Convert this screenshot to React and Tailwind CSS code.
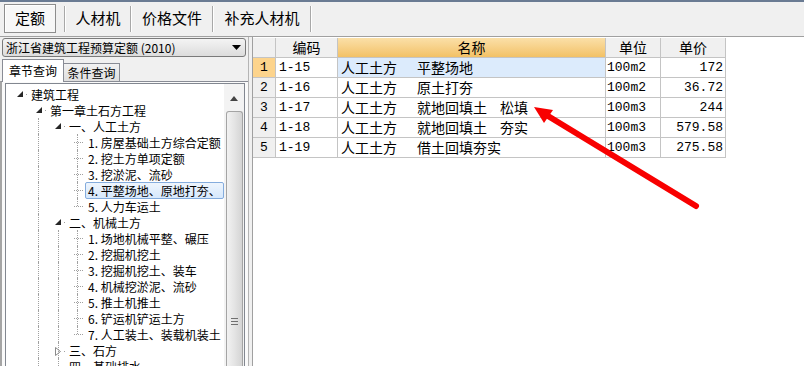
import React from "react";

const cjk = { fontFamily: '"Noto Sans CJK SC", "Liberation Sans", sans-serif' };
const mono = { fontFamily: '"Liberation Mono", "Noto Sans CJK SC", monospace' };

const topTabs = [
  { label: "定额", w: "w-[62px]", active: true },
  { label: "人材机", w: "w-[66px]" },
  { label: "价格文件", w: "w-[82px]" },
  { label: "补充人材机", w: "w-[98px]" },
];

// level: 0..3, kind: open | closed | leaf
const tree = [
  { level: 0, kind: "open", text: "建筑工程", guides: [] },
  { level: 1, kind: "open", text: "第一章土石方工程", guides: [] },
  { level: 2, kind: "open", text: "一、人工土方", guides: [38] },
  { level: 3, kind: "leaf", text: "1. 房屋基础土方综合定额", guides: [38, 77] },
  { level: 3, kind: "leaf", text: "2. 挖土方单项定额", guides: [38, 77] },
  { level: 3, kind: "leaf", text: "3. 挖淤泥、流砂", guides: [38, 77] },
  { level: 3, kind: "leaf", text: "4. 平整场地、原地打夯、", guides: [38, 77], selected: true },
  { level: 3, kind: "leaf", text: "5. 人力车运土", guides: [38], half: 77 },
  { level: 2, kind: "open", text: "二、机械土方", guides: [38] },
  { level: 3, kind: "leaf", text: "1. 场地机械平整、碾压", guides: [38, 58, 77] },
  { level: 3, kind: "leaf", text: "2. 挖掘机挖土", guides: [38, 58, 77] },
  { level: 3, kind: "leaf", text: "3. 挖掘机挖土、装车", guides: [38, 58, 77] },
  { level: 3, kind: "leaf", text: "4. 机械挖淤泥、流砂", guides: [38, 58, 77] },
  { level: 3, kind: "leaf", text: "5. 推土机推土", guides: [38, 58, 77] },
  { level: 3, kind: "leaf", text: "6. 铲运机铲运土方", guides: [38, 58, 77] },
  { level: 3, kind: "leaf", text: "7. 人工装土、装载机装土", guides: [38, 58], half: 77 },
  { level: 2, kind: "closed", text: "三、石方", guides: [38, 58] },
  { level: 2, kind: "leaf", text: "四、基础排水", guides: [38, 58] },
];

const textX = [24, 43, 62, 81];

const rows = [
  { no: "1", code: "1-15", name: ["人工土方", "平整场地"], unit: "100m2", price: "172" },
  { no: "2", code: "1-16", name: ["人工土方", "原土打夯"], unit: "100m2", price: "36.72" },
  { no: "3", code: "1-17", name: ["人工土方", "就地回填土", "松填"], unit: "100m3", price: "244" },
  { no: "4", code: "1-18", name: ["人工土方", "就地回填土", "夯实"], unit: "100m3", price: "579.58" },
  { no: "5", code: "1-19", name: ["人工土方", "借土回填夯实"], unit: "100m3", price: "275.58" },
];

function Expander({ kind }) {
  if (kind === "open") {
    return (
      <svg width="6" height="6" viewBox="0 0 6 6" className="shrink-0">
        <polygon points="6,0 6,6 0,6" fill="#262626" />
      </svg>
    );
  }
  return (
    <svg width="6" height="9" viewBox="0 0 6 9" className="shrink-0">
      <polygon points="0.5,0.5 5.5,4.5 0.5,8.5" fill="none" stroke="#8a8a8a" />
    </svg>
  );
}

function TreeRow({ item }) {
  const x = textX[item.level];
  return (
    <div className="relative h-[16px] flex items-center" style={{ paddingLeft: x }}>
      {item.guides.map((g) => (
        <span
          key={g}
          className="absolute top-0 bottom-0 border-l border-dotted border-[#a0a0a0]"
          style={{ left: g - 6 }}
        />
      ))}
      {item.half && (
        <span
          className="absolute top-0 h-[8px] border-l border-dotted border-[#a0a0a0]"
          style={{ left: item.half - 6 }}
        />
      )}
      {item.kind === "leaf" ? (
        <span
          className="absolute top-[8px] w-[9px] border-t border-dotted border-[#a0a0a0]"
          style={{ left: x - 13 }}
        />
      ) : (
        <span className="absolute top-[5px] flex items-center" style={{ left: x - 13 }}>
          <Expander kind={item.kind} />
          <span className="ml-[3px] w-[1px] h-[1px] bg-[#a0a0a0]" />
        </span>
      )}
      <span
        className={
          "whitespace-nowrap text-[12px] leading-[15px] text-black px-[2px] -ml-[2px] " +
          (item.selected
            ? "bg-gradient-to-b from-[#eef5fd] to-[#d6e8fc] border border-[#84acdd] rounded-[2px]"
            : "border border-transparent")
        }
        style={cjk}
      >
        {item.text}
      </span>
    </div>
  );
}

export default function App() {
  return (
    <div className="w-[804px] h-[366px] overflow-hidden bg-[#f0f0f0] flex flex-col relative" style={cjk}>
      {/* top tab strip */}
      <div className="h-[37px] shrink-0 border-t-2 border-[#6a7b93] border-b border-b-[#a0a0a0] flex pl-[4px] pt-[1px]">
        {topTabs.map((t) => (
          <div key={t.label} className={`${t.w} h-[31px] flex items-center`}>
            {t.active ? (
              <div className="w-[52px] h-[29px] flex items-center justify-center border border-[#8d8d8d] bg-[#f7f7f7] shadow-[inset_1px_1px_0_#ffffff]">
                <span className="text-[15px] text-black">{t.label}</span>
              </div>
            ) : (
              <div className="flex-1 h-[26px] flex items-center justify-center">
                <span className="text-[15px] text-black">{t.label}</span>
              </div>
            )}
            <div className="w-[2px] h-[26px] ml-auto border-l border-[#a8a8a8] border-r border-r-white" />
          </div>
        ))}
      </div>

      <div className="flex flex-1 min-h-0">
        {/* left pane */}
        <div className="w-[248px] shrink-0 flex flex-col pt-[1px]">
          <div className="mx-[2px] h-[19px] rounded-[3px] border border-[#7a7a7a] bg-gradient-to-b from-[#f4f4f4] to-[#dcdcdc] flex items-center pl-[3px] pr-[4px]">
            <span className="text-[12px] text-black flex-1 whitespace-nowrap">浙江省建筑工程预算定额 (2010)</span>
            <svg width="9" height="5" viewBox="0 0 9 5">
              <polygon points="0,0 9,0 4.5,5" fill="#000" />
            </svg>
          </div>
          <div className="flex items-end h-[23px] pl-[2px] mt-[1px]">
            <div className="w-[62px] h-[23px] bg-white border border-b-0 border-[#898c95] flex items-center justify-center -mb-[1px] relative z-10">
              <span className="text-[12px] text-black">章节查询</span>
            </div>
            <div className="w-[56px] h-[18px] bg-gradient-to-b from-[#f2f2f2] to-[#dedede] border border-b-0 border-l-0 border-[#898c95] flex items-center justify-center">
              <span className="text-[12px] text-black">条件查询</span>
            </div>
          </div>
          <div className="flex-1 min-h-0 border-l-2 border-[#a5a5a5] border-t border-t-[#898c95] bg-[#fafafa] pl-[3px] pr-[3px] pt-[1px] flex">
            <div className="flex-1 min-w-0 border border-b-0 border-[#828790] bg-white flex">
              <div className="flex-1 min-w-0 overflow-hidden pt-[2px]">
                {tree.map((item, i) => (
                  <TreeRow key={i} item={item} />
                ))}
              </div>
              {/* scrollbar */}
              <div className="w-[20px] shrink-0 bg-[#f3f3f3] flex flex-col items-center pt-[1px]">
                <div className="h-[26px] w-full flex items-center justify-center">
                  <svg width="8" height="5" viewBox="0 0 8 5">
                    <polygon points="4,0 8,5 0,5" fill="#444" />
                  </svg>
                </div>
                <div className="w-[17px] flex-1 rounded-t-[3px] border border-b-0 border-[#a4a4a4] bg-gradient-to-r from-[#f2f2f2] via-[#e4e4e4] to-[#d4d4d4] flex flex-col items-center pt-[206px]">
                  <div className="w-[7px] h-[2px] border-t border-[#707070]" />
                  <div className="w-[7px] h-[2px] border-t border-[#707070] mt-[1px]" />
                  <div className="w-[7px] h-[2px] border-t border-[#707070] mt-[1px]" />
                </div>
              </div>
            </div>
          </div>
        </div>

        {/* splitter */}
        <div className="w-[4px] shrink-0 border-l border-[#b4b4b4] bg-[#f0f0f0]" />

        {/* right pane */}
        <div className="flex-1 bg-white border-l border-[#a0a0a0] pt-[1px]">
          <div className="grid grid-cols-[23px_62px_268px_55px_65px] w-max">
            <div className="h-[20px] bg-[#f0f0f0] border-r border-b border-[#c4c4c4]" />
            <div className="h-[20px] bg-[#f0f0f0] border-r border-b border-[#c4c4c4] flex items-center justify-center text-[14px]">编码</div>
            <div className="h-[20px] bg-gradient-to-b from-[#fbe0a8] to-[#f2c165] border-r border-b border-[#c4c4c4] flex items-center justify-center text-[14px]">名称</div>
            <div className="h-[20px] bg-[#f0f0f0] border-r border-b border-[#c4c4c4] flex items-center justify-center text-[14px]">单位</div>
            <div className="h-[20px] bg-[#f0f0f0] border-r border-b border-[#c4c4c4] flex items-center justify-center text-[14px]">单价</div>
            {rows.map((r, i) => (
              <React.Fragment key={r.no}>
                <div
                  className={`h-[20px] border-r border-b border-[#c4c4c4] flex items-center justify-center text-[13px] ${i === 0 ? "bg-[#fdd48c]" : "bg-[#f0f0f0]"}`}
                  style={mono}
                >
                  {r.no}
                </div>
                <div className="h-[20px] border-r border-b border-[#c4c4c4] flex items-center pl-[3px] text-[13px]" style={mono}>
                  {r.code}
                </div>
                <div className={`h-[20px] border-r border-b border-[#c4c4c4] flex items-center pl-[3px] text-[14px] whitespace-nowrap ${i === 0 ? "bg-[#dcebfc]" : ""}`}>
                  <span>{r.name[0]}</span>
                  <span className="ml-[20px]">{r.name[1]}</span>
                  {r.name[2] && <span className="ml-[13px]">{r.name[2]}</span>}
                </div>
                <div className="h-[20px] border-r border-b border-[#c4c4c4] flex items-center pl-[1px] text-[13px]" style={mono}>
                  {r.unit}
                </div>
                <div className="h-[20px] border-r border-b border-[#c4c4c4] flex items-center justify-end pr-[2px] text-[13px]" style={mono}>
                  {r.price}
                </div>
              </React.Fragment>
            ))}
          </div>
        </div>
      </div>

      {/* annotation arrow */}
      <svg className="absolute left-0 top-0 pointer-events-none" width="804" height="366">
        <line x1="696" y1="206" x2="548" y2="116" stroke="#f80000" strokeWidth="6" strokeLinecap="round" />
        <polygon points="534,107 553,110 544,123" fill="#f80000" />
      </svg>
    </div>
  );
}
